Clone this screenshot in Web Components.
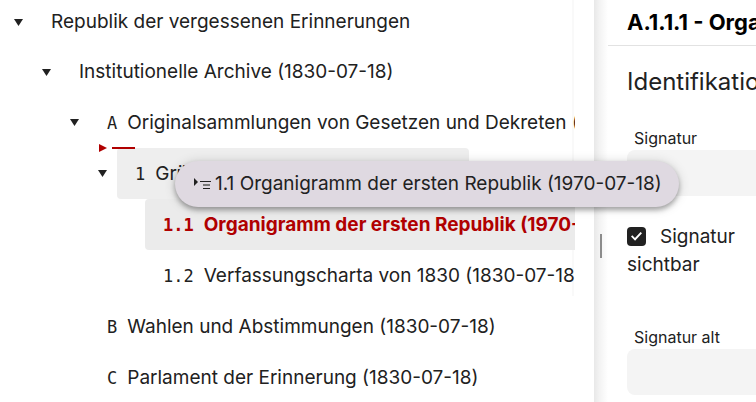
<!DOCTYPE html>
<html lang="de">
<head>
<meta charset="utf-8">
<title>Archivplan</title>
<style>
  html, body {
    height: 100%;
  }
  body {
    margin: 0;
    overflow: hidden;
    background: #fff;
    color: #212121;
    font-family: Inter, "Liberation Sans", sans-serif;
    font-size: 19px;
    line-height: 28px;
  }
</style>
</head>
<body>
<archive-app>
  <archive-tree slot="tree">
    <tree-node label="Republik der vergessenen Erinnerungen" open>
      <tree-node label="Institutionelle Archive (1830-07-18)" open>
        <tree-node code="A" label="Originalsammlungen von Gesetzen und Dekreten (1830-07-18)" open>
          <tree-node code="1" label="Gründungsurkunde (1830-07-18)" open hovered drop-before>
            <tree-node code="1.1" label="Organigramm der ersten Republik (1970-07-18)" selected></tree-node>
            <tree-node code="1.2" label="Verfassungscharta von 1830 (1830-07-18)"></tree-node>
          </tree-node>
        </tree-node>
        <tree-node code="B" label="Wahlen und Abstimmungen (1830-07-18)"></tree-node>
        <tree-node code="C" label="Parlament der Erinnerung (1830-07-18)"></tree-node>
      </tree-node>
    </tree-node>
  </archive-tree>
  <detail-panel slot="detail" heading="A.1.1.1 - Organigramm der ersten Republik" section="Identifikation">
    <text-field label="Signatur"></text-field>
    <check-field label="Signatur sichtbar"></check-field>
    <text-field label="Signatur alt"></text-field>
  </detail-panel>
  <drag-chip slot="overlay">1.1 Organigramm der ersten Republik (1970-07-18)</drag-chip>
</archive-app>

<script>
const appCss = `
:host{
  display: flex;
  position: relative;
  height: 100%;
  overflow: hidden;
}
.tree{
  flex: 1;
  min-width: 0;
  padding-right: 19px;
  overflow: hidden;
}
.splitter{
  flex: none;
  display: flex;
  align-items: center;
  width: 14px;
  padding-top: 90px;
  box-sizing: border-box;
  background: linear-gradient(to right, #e8e8e8, #f3f3f3 40%, #fff);
}
.splitter span{
  width: 2px;
  height: 24px;
  margin-left: 6px;
  background: #8c8c8c;
}
.detail{
  flex: none;
  width: 18%;
  min-width: 148px;
  overflow: hidden;
}
`

customElements.define('archive-app', class extends HTMLElement {
  connectedCallback() {
    const shadow = this.attachShadow({mode: 'open'});
    shadow.innerHTML = `
    <style>${appCss}</style>
    <div class="tree"><slot name="tree"></slot></div>
    <div class="splitter" role="separator"><span></span></div>
    <div class="detail"><slot name="detail"></slot></div>
    <slot name="overlay"></slot>`
  }
});

// The tree is scrolled down by a few pixels, hence the negative margin
const treeCss = `
:host{
  display: block;
  position: relative;
  margin-top: -3px;
  overflow: hidden;
}
:host::after{
  content: '';
  position: absolute;
  top: 0;
  right: 1px;
  width: 2px;
  height: 299px;
  background: #f9f9f9;
  z-index: -1;
}
`

customElements.define('archive-tree', class extends HTMLElement {
  connectedCallback() {
    const shadow = this.attachShadow({mode: 'open'});
    shadow.innerHTML = `
    <style>${treeCss}</style>
    <slot></slot>`
  }
});

const nodeCss = `
:host{
  display: block;
}
.row{
  position: relative;
  display: flex;
  height: 50px;
}
:host([code]) .row{
  height: 51px;
}
.toggle{
  flex: none;
  box-sizing: border-box;
  width: 33px;
  padding: 0 0 0 14px;
  border: 0;
  background: none;
  text-align: left;
  color: inherit;
}
.toggle svg{
  display: block;
}
.item{
  flex: none;
  display: flex;
  align-items: center;
  gap: 10px;
  padding: 0 18px;
  border: 0;
  border-radius: 4px;
  background: none;
  color: inherit;
  font: inherit;
  white-space: nowrap;
}
.code{
  font-family: "DejaVu Sans Mono", monospace;
  font-size: 17px;
}
:host([hovered]) .item{
  background: #eee;
}
:host([selected]) .item{
  background: #ebebeb;
  color: #b00000;
  font-weight: 700;
}
.children{
  padding-left: 28px;
}
.drop{
  position: absolute;
  top: -4px;
  left: 15px;
}
`

customElements.define('tree-node', class extends HTMLElement {
  connectedCallback() {
    const shadow = this.attachShadow({mode: 'open'});
    const label = this.getAttribute('label')
    const code = this.getAttribute('code')
    const open = this.hasAttribute('open')
    const drop = this.hasAttribute('drop-before')
    shadow.innerHTML = `
    <style>${nodeCss}</style>
    <div class="row">
      ${open ? `<button class="toggle" aria-label="Zuklappen">
        <svg width="9" height="7" viewBox="0 0 9 7"><path d="M0 0h9L4.5 7z" fill="currentColor"/></svg>
      </button>` : '<span class="toggle"></span>'}
      <button class="item">${code ? `<span class="code">${code}</span>` : ''}<span>${label}</span></button>
      ${drop ? `<svg class="drop" width="36" height="8" viewBox="0 0 36 8">
        <path d="M0 0l8 4-8 4zM13 3h23v2H13z" fill="#b00000"/>
      </svg>` : ''}
    </div>
    <div class="children"><slot></slot></div>`
  }
});

const panelCss = `
:host{
  display: block;
}
h1{
  margin: 0;
  padding: 7px 19px 8px;
  border-bottom: 1px solid #e2e2e2;
  color: #000;
  font-size: 22px;
  line-height: 30px;
  font-weight: 700;
  white-space: nowrap;
}
.body{
  padding: 20px 0 0 19px;
}
h2{
  margin: 0 0 24px;
  font-size: 24px;
  line-height: 32px;
  font-weight: 400;
}
`

customElements.define('detail-panel', class extends HTMLElement {
  connectedCallback() {
    const shadow = this.attachShadow({mode: 'open'});
    shadow.innerHTML = `
    <style>${panelCss}</style>
    <h1>${this.getAttribute('heading')}</h1>
    <div class="body">
      <h2>${this.getAttribute('section')}</h2>
      <slot></slot>
    </div>`
  }
});

const textFieldCss = `
:host{
  display: block;
  margin-bottom: 27px;
}
label{
  display: block;
  padding: 4px 7px 0;
  font-size: 16px;
  line-height: 24px;
}
input{
  display: block;
  box-sizing: border-box;
  width: 300px;
  height: 46px;
  padding: 0 12px;
  border: 0;
  border-radius: 8px;
  background: #f4f4f4;
  font: inherit;
}
`

customElements.define('text-field', class extends HTMLElement {
  connectedCallback() {
    const shadow = this.attachShadow({mode: 'open'});
    shadow.innerHTML = `
    <style>${textFieldCss}</style>
    <label for="field">${this.getAttribute('label')}</label>
    <input id="field" type="text">`
  }
});

const checkFieldCss = `
:host{
  display: block;
  margin-bottom: 42px;
}
input{
  appearance: none;
  display: inline-grid;
  place-content: center;
  width: 19px;
  height: 19px;
  margin: 0 14px 0 0;
  border-radius: 4px;
  background: #212121;
  vertical-align: 2px;
}
input:checked::before{
  content: '';
  width: 11px;
  height: 9px;
  background: #fff;
  clip-path: polygon(0 50%, 12% 36%, 36% 66%, 87% 0, 100% 14%, 37% 96%);
}
`

customElements.define('check-field', class extends HTMLElement {
  connectedCallback() {
    const shadow = this.attachShadow({mode: 'open'});
    shadow.innerHTML = `
    <style>${checkFieldCss}</style>
    <input id="check" type="checkbox" checked><label for="check">${this.getAttribute('label')}</label>`
  }
});

const chipCss = `
:host{
  position: absolute;
  top: 161px;
  left: 175px;
  display: flex;
  align-items: center;
  gap: 4px;
  height: 46px;
  padding: 0 17px 0 19px;
  border-radius: 23px;
  background: #dfd9e1;
  box-shadow: 0 3px 5px rgba(0, 0, 0, .3), 0 1px 12px rgba(0, 0, 0, .16);
  white-space: nowrap;
}
`

customElements.define('drag-chip', class extends HTMLElement {
  connectedCallback() {
    const shadow = this.attachShadow({mode: 'open'});
    shadow.innerHTML = `
    <style>${chipCss}</style>
    <svg width="17" height="12" viewBox="0 0 17 12">
      <path d="M0 0l4 4-4 4z" fill="#212121"/>
      <path d="M6 3.500h11M9 10.500h7" stroke="#212121"/>
      <path d="M9 7h7" stroke="#777" stroke-width="2"/>
    </svg>
    <span><slot></slot></span>`
  }
});
</script>
</body>
</html>
